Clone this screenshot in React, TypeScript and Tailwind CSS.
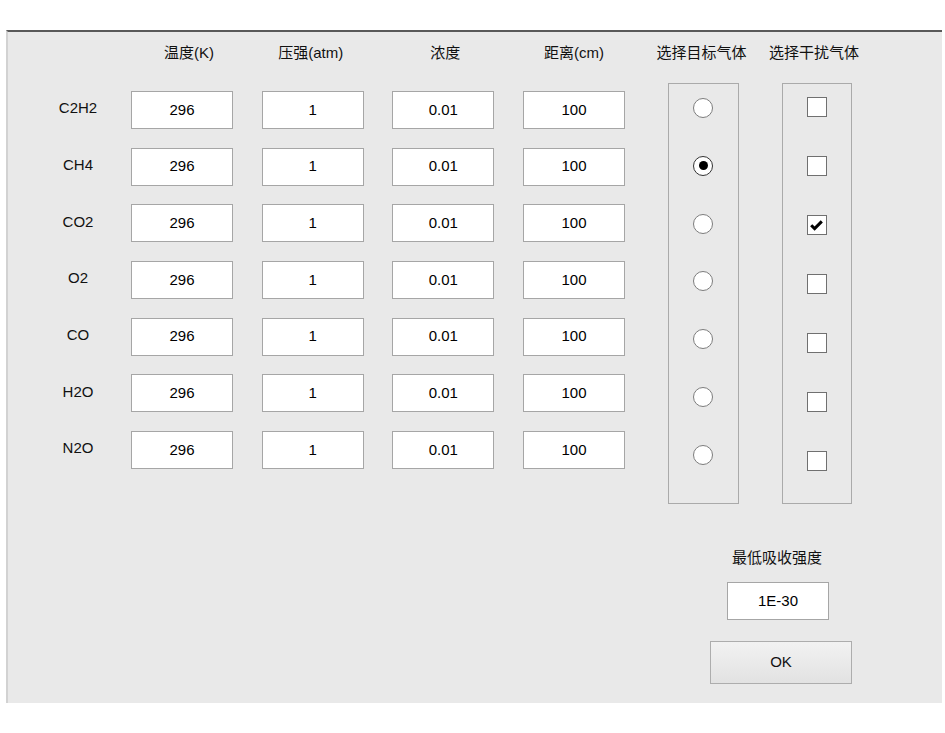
import React from 'react';

const gases = ['C2H2', 'CH4', 'CO2', 'O2', 'CO', 'H2O', 'N2O'];

const columns = [
  { title: '温度(K)', value: '296', shift: 'pl-[14px]' },
  { title: '压强(atm)', value: '1', shift: 'pr-[4px]' },
  { title: '浓度', value: '0.01', shift: 'pl-[4px]' },
  { title: '距离(cm)', value: '100', shift: '' },
];

const font = "font-['Liberation_Sans','Noto_Sans_CJK_SC',sans-serif]";

function Field({ value }: { value: string }) {
  return (
    <div className="w-[102px] h-[38px] bg-white border border-[#a6a6a6] flex items-center justify-center text-[15px] text-black">
      {value}
    </div>
  );
}

function Radio({ checked }: { checked: boolean }) {
  return (
    <div
      className={
        checked
          ? 'w-[20px] h-[20px] rounded-full bg-white border-[1.5px] border-[#333] flex items-center justify-center'
          : 'w-[20px] h-[20px] rounded-full bg-white border-[1.5px] border-[#7d7d7d]'
      }
    >
      {checked && <div className="w-[9px] h-[9px] rounded-full bg-black" />}
    </div>
  );
}

function Check({ checked }: { checked: boolean }) {
  return (
    <div className="w-[20px] h-[20px] bg-white border border-[#707070] flex items-center justify-center">
      {checked && (
        <svg width="13" height="11" viewBox="0 0 13 11">
          <path d="M1.2 5.2 L4.6 8.6 L11.8 1.4" fill="none" stroke="#000" strokeWidth="3" strokeLinejoin="miter" />
        </svg>
      )}
    </div>
  );
}

export default function App() {
  const target = 1;
  const interfere = [2];

  return (
    <div className={`w-[945px] h-[733px] bg-white pt-[30px] pl-[6px] ${font}`}>
      <div className="w-[936px] h-[673px] bg-[#e9e9e9] border-t-2 border-t-[#595959] border-l-2 border-l-[#d2d2d2] text-[#111]">
        <div className="flex">
          {/* row labels */}
          <div className="w-[123px] pl-[17px] flex flex-col">
            <div className="h-[59px]" />
            <div className="flex flex-col gap-y-[18.67px]">
              {gases.map((g) => (
                <div key={g} className="h-[38px] flex items-center justify-center text-[15px] pb-[3px]">
                  {g}
                </div>
              ))}
            </div>
          </div>

          {/* value columns */}
          <div className="flex gap-x-[28.67px]">
            {columns.map((c) => (
              <div key={c.title} className="flex flex-col">
                <div className={`h-[42px] flex items-center justify-center text-[15px] ${c.shift}`}>
                  {c.title}
                </div>
                <div className="mt-[17px] flex flex-col gap-y-[18.67px]">
                  {gases.map((g) => (
                    <Field key={g} value={c.value} />
                  ))}
                </div>
              </div>
            ))}
          </div>

          {/* target gas */}
          <div className="ml-[43px] w-[71px] flex flex-col">
            <div className="h-[42px] flex items-center justify-center text-[15px] whitespace-nowrap pr-[4px]">
              选择目标气体
            </div>
            <div className="mt-[9px] h-[421px] border border-[#aaaaaa] flex flex-col items-center pt-[14px] gap-y-[37.8px]">
              {gases.map((g, i) => (
                <Radio key={g} checked={i === target} />
              ))}
            </div>
          </div>

          {/* interfering gas */}
          <div className="ml-[43px] w-[70px] flex flex-col">
            <div className="h-[42px] flex items-center justify-center text-[15px] whitespace-nowrap pr-[6px]">
              选择干扰气体
            </div>
            <div className="mt-[9px] h-[421px] border border-[#aaaaaa] flex flex-col items-center pt-[13px] gap-y-[39px]">
              {gases.map((g, i) => (
                <Check key={g} checked={interfere.includes(i)} />
              ))}
            </div>
          </div>
        </div>

        {/* threshold + OK */}
        <div className="ml-[702px] mt-[44px] w-[142px] flex flex-col items-center">
          <div className="h-[20px] leading-[20px] text-[15px] mr-[8px] whitespace-nowrap">最低吸收强度</div>
          <div className="mt-[14px] mr-[6px]">
            <Field value="1E-30" />
          </div>
          <button className="mt-[21px] w-[142px] h-[43px] border border-[#adadad] bg-gradient-to-b from-[#f2f2f2] to-[#e2e2e2] text-[15px] text-[#111]">
            OK
          </button>
        </div>
      </div>
    </div>
  );
}
